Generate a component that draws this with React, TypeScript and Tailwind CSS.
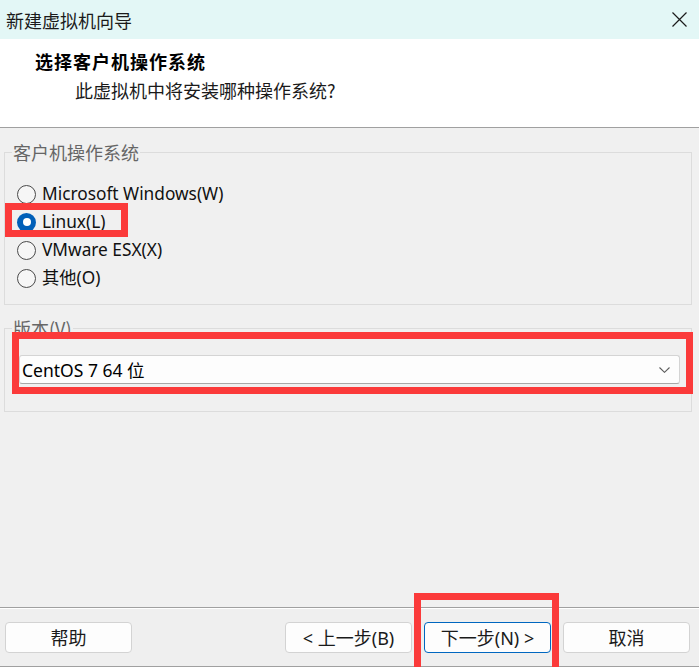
import React from 'react';

const latin = 'font-["Noto_Sans","Noto_Sans_CJK_SC",sans-serif]';
const cjk = 'font-["Noto_Sans_CJK_SC","Noto_Sans",sans-serif]';

function Radio({ label, checked = false, marked = false }: { label: string; checked?: boolean; marked?: boolean }) {
  return (
    <div className="relative flex h-[28px] items-center gap-[6px]">
      {checked ? (
        <span className="flex h-[19px] w-[19px] items-center justify-center rounded-full bg-[#005fb8]">
          <span className="h-[8px] w-[8px] rounded-full bg-white" />
        </span>
      ) : (
        <span className="h-[19px] w-[19px] rounded-full border border-[#4a4a4a] bg-[#f6f6f6]" />
      )}
      <span className={`${latin} text-[17.3px] leading-[22px] text-[#111]`}>{label}</span>
      {marked && (
        <span className="pointer-events-none absolute -left-[12px] -top-[5px] h-[34px] w-[123px] border-[7px] border-[#fb3a3a]" />
      )}
    </div>
  );
}

function Button({ children, primary = false }: { children: React.ReactNode; primary?: boolean }) {
  return (
    <button
      className={`flex h-[31px] w-[127px] items-center justify-center rounded-[4px] bg-[#fdfdfd] ${latin} text-[18px] leading-[22px] text-[#1a1a1a] ${
        primary ? 'border border-[#0067c0]' : 'border border-[#d3d3d3]'
      }`}
    >
      {children}
    </button>
  );
}

export default function App() {
  return (
    <div className="flex h-[667px] w-[699px] flex-col overflow-hidden bg-[#f0f0f0]">
      {/* title bar */}
      <div className="flex h-[39px] shrink-0 items-center justify-between bg-[#e3f7f6] pl-[6px] pr-[12px]">
        <span className={`${cjk} text-[18px] leading-[22px] text-[#1b1b1b]`}>新建虚拟机向导</span>
        <svg width="15" height="15" viewBox="0 0 15 15" fill="none" stroke="#1b1b1b" strokeWidth="1.2">
          <path d="M0.5 0.5 L14.5 14.5 M14.5 0.5 L0.5 14.5" />
        </svg>
      </div>

      {/* header */}
      <div className="h-[89px] shrink-0 border-b border-[#a0a0a0] bg-white pt-[10px]">
        <div className={`${cjk} pl-[35px] text-[18px] font-bold leading-[24px] tracking-[1px] text-black`}>选择客户机操作系统</div>
        <div className={`${cjk} mt-[5px] pl-[75px] text-[18px] leading-[24px] text-[#1a1a1a]`}>此虚拟机中将安装哪种操作系统?</div>
      </div>

      {/* body */}
      <div className="flex-1 pl-[4px] pr-[7px]">
        <fieldset className="mt-[14px] border border-[#dcdcdc] pb-[12px] pt-[18px]">
          <legend className={`${cjk} ml-[7px] px-[1px] text-[18px] leading-[20px] text-[#666]`}>客户机操作系统</legend>
          <div className="pl-[12px]">
            <Radio label="Microsoft Windows(W)" />
            <Radio label="Linux(L)" checked marked />
            <Radio label="VMware ESX(X)" />
            <Radio label="其他(O)" />
          </div>
        </fieldset>

        <fieldset className="mt-[13px] border border-[#dcdcdc] pb-[27px] pt-[17px]">
          <legend className={`${cjk} ml-[7px] px-[1px] text-[18px] leading-[20px] text-[#666]`}>版本(V)</legend>
          <div className="relative ml-[14px] mr-[11px]">
            <div className="flex h-[29px] items-center justify-between rounded-[3px] border border-[#d4d4d4] border-b-[#a8a8a8] bg-[#fdfdfd] pl-[2px] pr-[9px]">
              <span className={`${latin} text-[17.5px] leading-[22px] text-black`}>CentOS 7 64 位</span>
              <svg width="11" height="6" viewBox="0 0 11 6" fill="none" stroke="#5c5c5c" strokeWidth="1.1">
                <path d="M0.5 0.5 L5.5 5.3 L10.5 0.5" />
              </svg>
            </div>
            <span className="pointer-events-none absolute -bottom-[10px] -left-[7px] -right-[13px] -top-[23px] border-[7px] border-[#fb3a3a]" />
          </div>
        </fieldset>
      </div>

      {/* footer */}
      <div className="flex h-[60px] shrink-0 items-start justify-between border-y border-[#a0a0a0] bg-[#efefef] pl-[5px] pr-[9px] pt-[14px] shadow-[inset_0_1px_0_#ffffff]">
        <Button>帮助</Button>
        <div className="flex gap-[12px]">
          <Button>&lt; 上一步(B)</Button>
          <div className="relative">
            <Button primary>下一步(N) &gt;</Button>
            <span className="pointer-events-none absolute -bottom-[24px] -left-[10px] -right-[8px] -top-[29px] z-10 border-[7px] border-[#fb3a3a]" />
          </div>
          <Button>取消</Button>
        </div>
      </div>
    </div>
  );
}
